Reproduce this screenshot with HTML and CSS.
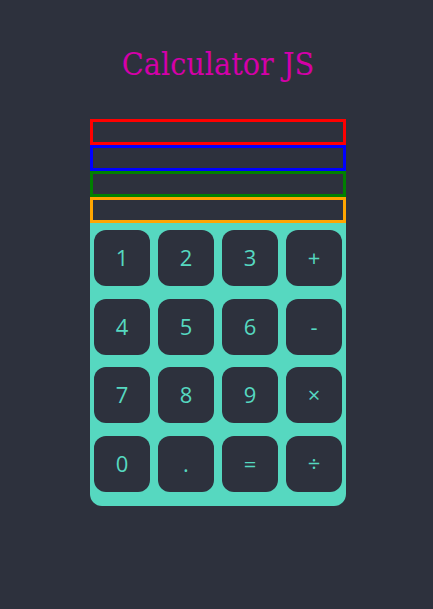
FILE: index.html
```html
<!DOCTYPE html>
<html>
<head>
<meta charset="utf-8">
<link rel="stylesheet" href="styles.css">
</head>
<body>
<h1 class="title">Calculator JS</h1>
<div class="calc">
  <div class="screen screen-red"></div>
  <div class="screen screen-blue"></div>
  <div class="screen screen-green"></div>
  <div class="screen screen-orange"></div>
  <div class="keys">
    <button class="key">1</button>
    <button class="key">2</button>
    <button class="key">3</button>
    <button class="key">+</button>
    <button class="key">4</button>
    <button class="key">5</button>
    <button class="key">6</button>
    <button class="key">-</button>
    <button class="key">7</button>
    <button class="key">8</button>
    <button class="key">9</button>
    <button class="key">×</button>
    <button class="key">0</button>
    <button class="key">.</button>
    <button class="key">=</button>
    <button class="key">÷</button>
  </div>
</div>
</body>
</html>
```
FILE: styles.css
```css
html, body {
  margin: 0;
  padding: 0;
  background: #2d313d;
}
body {
  height: 609px;
  overflow: hidden;
}
.title {
  margin: 0;
  padding-top: 44px;
  padding-left: 3px;
  height: 75px;
  box-sizing: border-box;
  text-align: center;
  font-family: "DejaVu Serif Condensed", "DejaVu Serif", serif;
  font-stretch: condensed;
  font-weight: normal;
  font-size: 32px;
  line-height: 40px;
  color: #d400a8;
}
.calc {
  width: 256px;
  margin: 44px 0 0 90px;
}
.screen {
  height: 26px;
  box-sizing: border-box;
  border: 3px solid;
  background: #2d313d;
}
.screen-red { border-color: #ff0000; }
.screen-blue { border-color: #0000ff; }
.screen-green { border-color: #008000; }
.screen-orange { border-color: #ffa500; }
.keys {
  background: #56d8c0;
  border-radius: 0 0 12px 12px;
  display: grid;
  grid-template-columns: repeat(4, 56px);
  grid-auto-rows: 56px;
  column-gap: 8px;
  row-gap: 12.5px;
  padding: 7px 4px 14px;
}
.key {
  border: none;
  margin: 0;
  padding: 0 0 2px;
  background: #2d313d;
  border-radius: 12px;
  color: #56d8c0;
  font-family: "Open Sans", sans-serif;
  font-size: 22px;
  display: flex;
  align-items: center;
  justify-content: center;
}
```
